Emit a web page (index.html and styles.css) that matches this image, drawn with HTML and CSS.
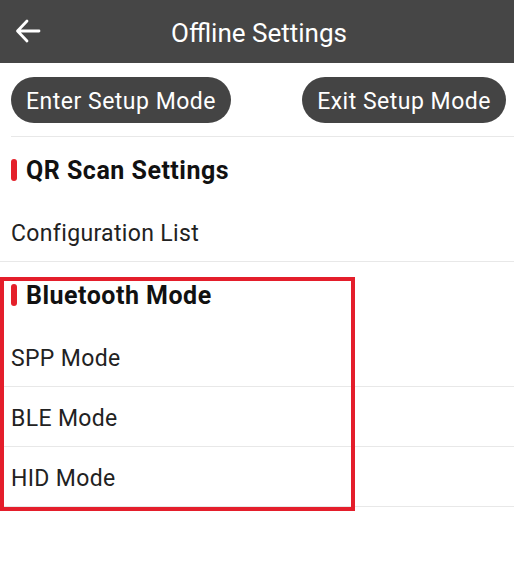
FILE: index.html
```html
<!DOCTYPE html>
<html>
<head>
<meta charset="utf-8">
<link rel="stylesheet" href="styles.css">
</head>
<body>
<div class="page">
  <header class="appbar">
    <svg class="back" width="26" height="24" viewBox="0 0 26 24">
      <path d="M24 12H3M12 2L2.5 12L12 22" fill="none" stroke="#fff" stroke-width="2.8" stroke-linecap="round" stroke-linejoin="round"/>
    </svg>
    <h1 class="title">Offline Settings</h1>
  </header>
  <div class="actions">
    <button class="pill">Enter Setup Mode</button>
    <button class="pill">Exit Setup Mode</button>
  </div>
  <section class="group">
    <h2 class="group-title"><span class="marker"></span>QR Scan Settings</h2>
    <div class="row">Configuration List</div>
  </section>
  <section class="group">
    <h2 class="group-title"><span class="marker"></span>Bluetooth Mode</h2>
    <div class="row">SPP Mode</div>
    <div class="row">BLE Mode</div>
    <div class="row">HID Mode</div>
  </section>
  <div class="highlight"></div>
</div>
</body>
</html>
```
FILE: styles.css
```css
* { box-sizing: border-box; }
html, body { margin: 0; padding: 0; background: #fff; }
body { font-family: Roboto, "Noto Sans", sans-serif; }
.page { position: relative; width: 514px; min-height: 572px; }
.appbar {
  height: 63px;
  background: #464646;
  display: flex;
  align-items: center;
  position: relative;
}
.back { position: absolute; left: 15px; top: 19px; }
.title {
  margin: 0;
  width: 100%;
  padding: 2px 0 0 4px;
  text-align: center;
  color: #fff;
  font-weight: 400;
  font-size: 26px;
}
.actions {
  display: flex;
  justify-content: space-between;
  padding: 14px 8px 13px 0;
  margin-left: 11px;
  border-bottom: 1px solid #e8e8e8;
}
.pill {
  height: 46px;
  border: none;
  border-radius: 23px;
  background: #444;
  color: #fff;
  font-family: Roboto, sans-serif;
  font-size: 23px;
  letter-spacing: 0.5px;
  padding: 2px 15px 0;
}
.group-title {
  margin: 0;
  height: 65px;
  display: flex;
  align-items: center;
  padding: 2px 0 0 11px;
  font-size: 25px;
  letter-spacing: 0.5px;
  font-weight: 700;
  color: #111;
}
.marker {
  width: 6px;
  height: 22px;
  border-radius: 3px;
  background: #e4202a;
  margin: -2px 9px 0 0;
}
.row {
  height: 60px;
  display: flex;
  align-items: center;
  padding: 3px 0 0 11px;
  font-size: 23px;
  letter-spacing: 0.35px;
  color: #222;
  border-bottom: 1px solid #e8e8e8;
}
.highlight {
  position: absolute;
  left: 0;
  top: 277px;
  width: 355px;
  height: 234px;
  border: 4px solid #e41e2b;
  pointer-events: none;
}
```
